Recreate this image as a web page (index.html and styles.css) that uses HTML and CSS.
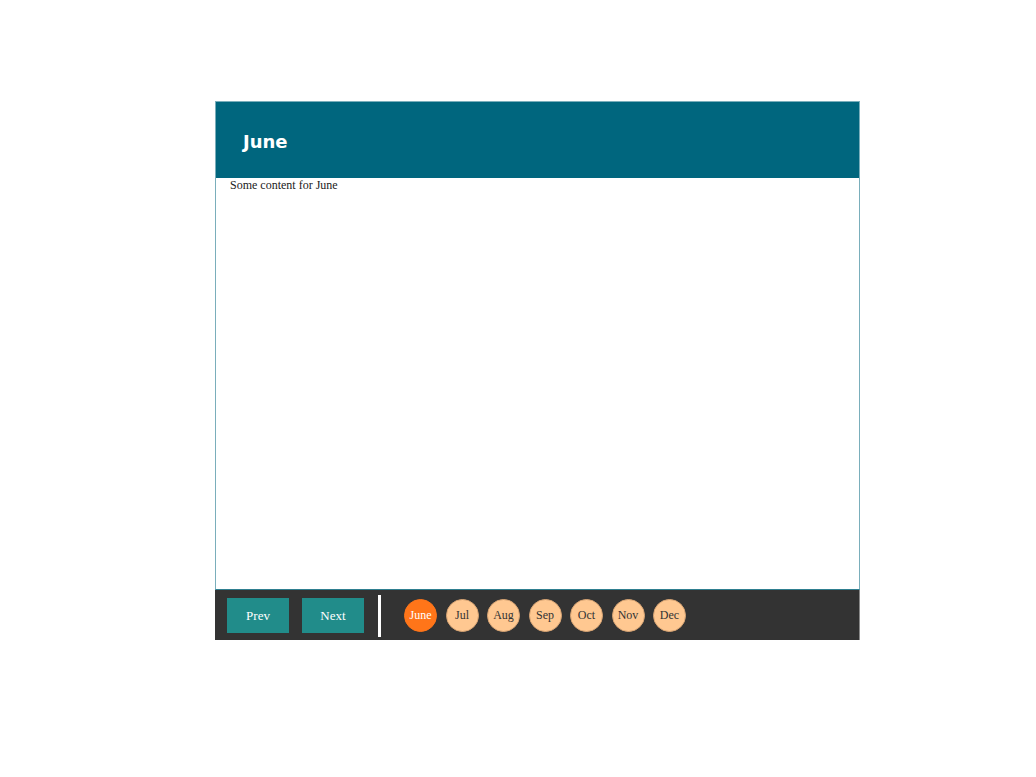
FILE: index.html
```html
<!DOCTYPE html>
<html>
<head>
<meta charset="utf-8">
<link rel="stylesheet" href="styles.css">
</head>
<body>
<div class="app">
  <div class="frame">
    <div class="header"><h1 class="title">June</h1></div>
    <div class="content">Some content for June</div>
  </div>
  <div class="footer">
    <button class="nav-btn">Prev</button>
    <button class="nav-btn">Next</button>
    <div class="divider"></div>
    <div class="months">
      <span class="month active">June</span>
      <span class="month">Jul</span>
      <span class="month">Aug</span>
      <span class="month">Sep</span>
      <span class="month">Oct</span>
      <span class="month">Nov</span>
      <span class="month">Dec</span>
    </div>
  </div>
</div>
</body>
</html>
```
FILE: styles.css
```css
html, body {
  margin: 0;
  padding: 0;
  background: #ffffff;
}
.app {
  margin: 101px 0 0 215px;
  width: 645px;
}
.frame {
  border: 1px solid #7aaebb;
  border-bottom-color: #2f7f90;
  height: 487px;
  display: flex;
  flex-direction: column;
}
.header {
  background: #00667e;
  height: 76px;
  box-sizing: border-box;
  display: flex;
  align-items: center;
  padding: 3px 0 0 27px;
}
.title {
  margin: 0;
  color: #ffffff;
  font-family: "DejaVu Sans", Verdana, sans-serif;
  font-weight: bold;
  font-size: 18px;
}
.content {
  font-family: "Liberation Serif", "Times New Roman", serif;
  font-size: 12px;
  color: #222;
  padding: 0 0 0 14px;
}
.footer {
  background: #333333;
  height: 50px;
  display: flex;
  align-items: center;
  padding: 1px 0 0 12px;
  box-sizing: border-box;
  border-right: 1px solid #8a8a8a;
}
.nav-btn {
  width: 62px;
  height: 35px;
  background: #218c8a;
  border: none;
  color: #ffffff;
  font-family: "Liberation Serif", "Times New Roman", serif;
  font-size: 13px;
  margin-right: 13px;
  padding: 0;
}
.divider {
  width: 3px;
  height: 42px;
  background: #ffffff;
  margin-left: 1px;
  margin-right: 23px;
}
.months {
  display: flex;
  gap: 8.5px;
}
.month {
  width: 31px;
  height: 31px;
  border-radius: 50%;
  background: #ffc891;
  border: 1px solid #d9a574;
  display: flex;
  align-items: center;
  justify-content: center;
  font-family: "Liberation Serif", "Times New Roman", serif;
  font-size: 12px;
  color: #333333;
}
.month.active {
  background: #ff7519;
  border-color: #ff7519;
  color: #ffffff;
}
```
